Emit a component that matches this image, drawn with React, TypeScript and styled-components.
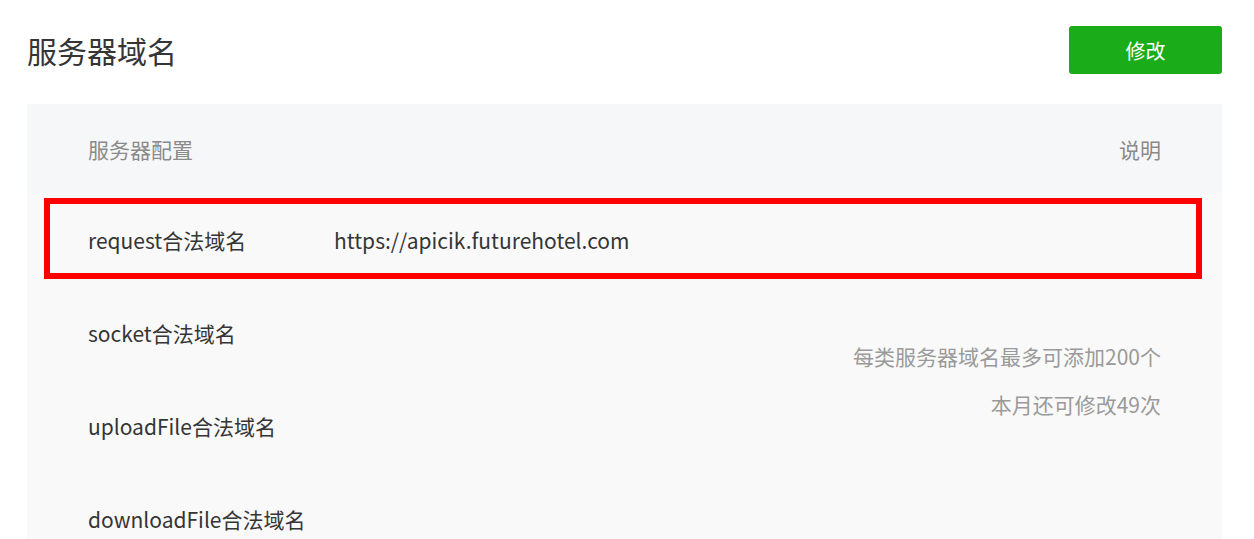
import React from "react";
import styled, { createGlobalStyle } from "styled-components";

const GlobalStyle = createGlobalStyle`
  body {
    margin: 0;
    background: #ffffff;
    font-family: "Noto Sans CJK SC", "Noto Sans", sans-serif;
    color: #353535;
  }
`;

const Page = styled.div`
  width: 1195px;
  padding: 26px 0 0 27px;
`;

const TopBar = styled.div`
  display: flex;
  align-items: center;
  justify-content: space-between;
  height: 48px;
`;

const Title = styled.h2`
  margin: 0;
  font-size: 30px;
  font-weight: 400;
  color: #353535;
  line-height: 1;
`;

const Button = styled.button`
  width: 153px;
  height: 48px;
  border: none;
  border-radius: 3px;
  background: #1aad19;
  color: #ffffff;
  font-family: inherit;
  font-size: 20px;
  cursor: pointer;
`;

const Panel = styled.div`
  margin-top: 30px;
  background: #f9f9f9;
`;

const Header = styled.div`
  display: flex;
  align-items: center;
  justify-content: space-between;
  height: 89px;
  padding: 0 61px;
  background: #f6f7f9;
  font-size: 21px;
  color: #8a8a8a;
`;

const Row = styled.div<{ $highlight?: boolean }>`
  position: relative;
  display: flex;
  align-items: center;
  height: 93px;
  padding: 0 61px;
  font-size: 21px;
  color: #353535;

  ${({ $highlight }) =>
    $highlight &&
    `
    &::after {
      content: "";
      position: absolute;
      top: 5px;
      bottom: 7px;
      left: 17px;
      right: 20px;
      border: 6px solid #ff0000;
      pointer-events: none;
    }
  `}
`;

const Label = styled.span`
  width: 246px;
  flex-shrink: 0;
`;

const Value = styled.span``;

const Section = styled.div`
  display: flex;
  justify-content: space-between;
`;

const Column = styled.div`
  flex: 1;
`;

const Notes = styled.div`
  display: flex;
  flex-direction: column;
  align-items: flex-end;
  padding: 46px 61px 0 0;
  font-size: 21px;
  line-height: 48px;
  color: #9a9a9a;
`;

const rows = ["socket合法域名", "uploadFile合法域名", "downloadFile合法域名"];

export default function App() {
  return (
    <>
      <GlobalStyle />
      <Page>
        <TopBar>
          <Title>服务器域名</Title>
          <Button>修改</Button>
        </TopBar>
        <Panel>
          <Header>
            <span>服务器配置</span>
            <span>说明</span>
          </Header>
          <Row $highlight>
            <Label>request合法域名</Label>
            <Value>https://apicik.futurehotel.com</Value>
          </Row>
          <Section>
            <Column>
              {rows.map((r) => (
                <Row key={r}>
                  <Label>{r}</Label>
                </Row>
              ))}
            </Column>
            <Notes>
              <span>每类服务器域名最多可添加200个</span>
              <span>本月还可修改49次</span>
            </Notes>
          </Section>
        </Panel>
      </Page>
    </>
  );
}
